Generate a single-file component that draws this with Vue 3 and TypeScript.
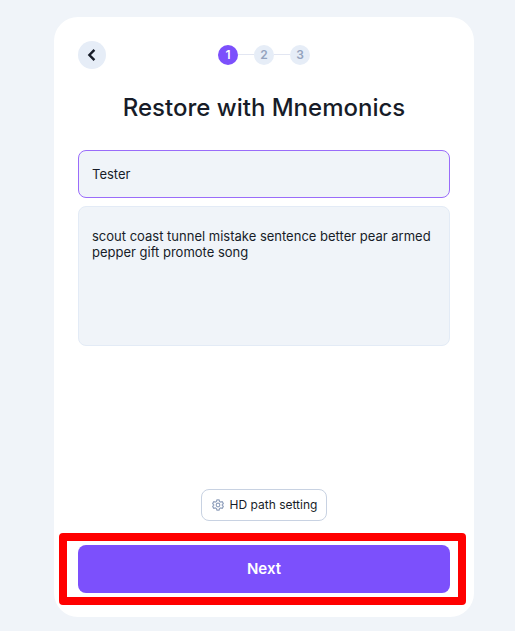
<script setup lang="ts">
import { ref } from 'vue'

const steps: number[] = [1, 2, 3]
const current = ref<number>(1)
const walletName = ref<string>('Tester')
const mnemonics = ref<string>(
  'scout coast tunnel mistake sentence better pear armed pepper gift promote song',
)
</script>

<template>
  <div class="page">
    <main class="card">
      <header class="top">
        <button class="back" type="button" aria-label="Back">
          <svg width="16" height="16" viewBox="0 0 16 16" fill="none" aria-hidden="true">
            <path d="M10.4 2.9 5.4 8l5 5.1" stroke="#171c28" stroke-width="2.4" />
          </svg>
        </button>
        <ol class="steps">
          <li v-for="step in steps" :key="step" class="step" :class="{ active: step === current }">
            {{ step }}
          </li>
        </ol>
      </header>

      <h1 class="title">Restore with Mnemonics</h1>

      <form class="form" @submit.prevent>
        <input v-model="walletName" class="field name" type="text" aria-label="Wallet name" />
        <textarea
          v-model="mnemonics"
          class="field words"
          aria-label="Mnemonics"
          spellcheck="false"
        ></textarea>

        <button class="setting" type="button">
          <svg width="12" height="12" viewBox="0 0 24 24" fill="none" stroke="#94a3be" stroke-width="2.4" stroke-linejoin="round" aria-hidden="true">
            <path d="M9.7 1.6h4.6l.8 3.4 2.1 1.2 3.2-.9 2.3 4-2.4 2.5v.4l2.4 2.5-2.3 4-3.2-.9-2.1 1.2-.8 3.4H9.7L8.900 19l-2.1-1.200-3.2.9-2.300-4 2.400-2.500v-.4L1.300 9.300l2.300-4 3.200.9L8.900 5z" />
            <circle cx="12" cy="12" r="3.6" />
          </svg>
          HD path setting
        </button>

        <div class="submit">
          <button class="next" type="submit">Next</button>
        </div>
      </form>
    </main>
  </div>
</template>

<style>
body {
  background: #f0f4f9;
}
</style>

<style scoped>
.page {
  box-sizing: border-box;
  display: flex;
  min-height: 100vh;
  padding: 17px 41px 14px 54px;
  font-family: Inter, "Liberation Sans", sans-serif;
  color: #171c28;
}

.card {
  box-sizing: border-box;
  display: flex;
  flex: 1;
  flex-direction: column;
  min-width: 0;
  padding: 24px;
  border-radius: 24px;
  background: #fff;
}

button,
input,
textarea {
  box-sizing: border-box;
  margin: 0;
  font-family: inherit;
  color: inherit;
}

.top {
  display: grid;
  grid-template-columns: 28px 1fr 28px;
  align-items: center;
}

.back {
  display: flex;
  align-items: center;
  justify-content: center;
  width: 28px;
  height: 28px;
  padding: 0;
  border: 0;
  border-radius: 50%;
  background: #e6edf7;
}

.steps {
  display: flex;
  justify-content: center;
  gap: 16px;
  margin: 0;
  padding: 0;
  list-style: none;
}

.step {
  position: relative;
  width: 20px;
  border-radius: 50%;
  background: #e6edf7;
  color: #94a3be;
  font-size: 12px;
  font-weight: 600;
  line-height: 20px;
  text-align: center;
}

.step.active {
  background: #7c50fc;
  color: #fff;
}

.step + .step::before {
  content: "";
  position: absolute;
  top: 9px;
  right: 100%;
  width: 16px;
  height: 1px;
  background: #e2e6f2;
}

.title {
  margin: 24px 0 28px;
  font-size: 24px;
  font-weight: 500;
  line-height: 29px;
  text-align: center;
}

.form {
  display: flex;
  flex: 1;
  flex-direction: column;
}

.field {
  width: 100%;
  border: 1px solid #e3ebf6;
  border-radius: 8px;
  outline: none;
  background: #f0f4f9;
  font-size: 13px;
  line-height: 16px;
}

.name {
  height: 48px;
  padding: 0 13px;
  border-color: #9a6cfa;
}

.words {
  display: block;
  height: 140px;
  margin-top: 8px;
  padding: 21px 13px;
  resize: none;
}

.setting {
  display: flex;
  align-items: center;
  align-self: center;
  gap: 6px;
  height: 32px;
  margin: auto 0 24px;
  padding: 0 9px 1px 10px;
  border: 1px solid #c8d2e2;
  border-radius: 8px;
  background: #fff;
  font-size: 12px;
}

.submit {
  position: relative;
}

/* Highlight frame around the main action */
.submit::after {
  content: "";
  position: absolute;
  inset: -12px -16px -12px -19px;
  border: 8px solid #f00;
  border-radius: 4px;
  pointer-events: none;
}

.next {
  display: block;
  width: 100%;
  height: 48px;
  padding: 0 0 2px;
  border: 0;
  border-radius: 8px;
  background: #7c50fc;
  color: #fff;
  font-size: 15px;
  font-weight: 600;
}
</style>
